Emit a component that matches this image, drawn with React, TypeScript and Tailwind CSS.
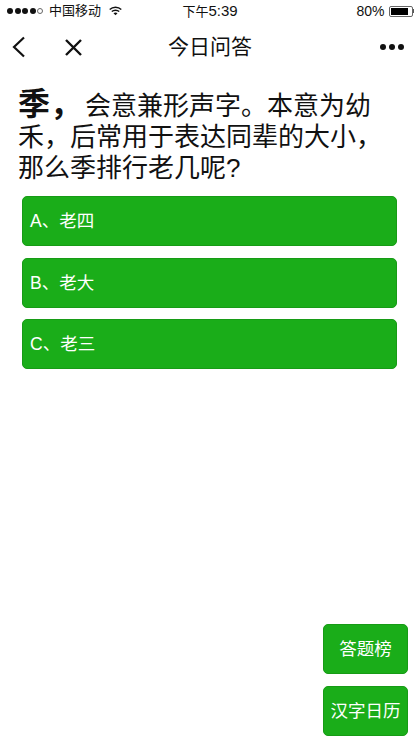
const options = ["A、老四", "B、老大", "C、老三"];
const font = "font-['Liberation_Sans','Noto_Sans_CJK_SC',sans-serif]";

function Wifi() {
  return (
    <svg width="13" height="10" viewBox="0 0 15 11" className="ml-[8px]">
      <path d="M0.8 3.8 C4.5 0.2 10.5 0.2 14.2 3.8" fill="none" stroke="#111" strokeWidth="1.6" />
      <path d="M3.2 6.2 C5.5 4.1 9.5 4.1 11.8 6.2" fill="none" stroke="#111" strokeWidth="1.6" />
      <path d="M7.5 10.5 L5.2 8.1 C6.5 7.1 8.5 7.1 9.8 8.1 Z" fill="#111" />
    </svg>
  );
}

function StatusBar() {
  return (
    <div className="relative flex h-[22px] items-center pl-[7px] pr-[6px] text-[13px] text-[#111]">
      <div className="flex items-center gap-[1.5px]">
        {[0, 1, 2, 3].map((i) => (
          <span key={i} className="size-[6px] rounded-full bg-[#111]" />
        ))}
        <span className="size-[6px] rounded-full border border-[#666]" />
      </div>
      <span className="ml-[6px]">中国移动</span>
      <Wifi />
      <span className="absolute left-0 right-0 text-center">
        下午<span className="text-[15px]">5:39</span>
      </span>
      <div className="ml-auto flex items-center">
        <span className="text-[14px]">80%</span>
        <div className="ml-[4px] flex h-[11px] w-[24px] items-stretch rounded-[2px] border border-[#666] p-[1px]">
          <span className="w-[17px] bg-black" />
        </div>
        <span className="h-[4px] w-[1.5px] bg-[#555]" />
      </div>
    </div>
  );
}

function NavBar() {
  return (
    <div className="relative flex h-[50px] items-center pl-[12px] pr-[16px]">
      <svg width="14" height="22" viewBox="0 0 14 22">
        <path d="M12 1.5 L2 11 L12 20.5" fill="none" stroke="#111" strokeWidth="2.2" />
      </svg>
      <svg width="19" height="19" viewBox="0 0 19 19" className="ml-[38px]">
        <path d="M2 2 L17 17 M17 2 L2 17" fill="none" stroke="#111" strokeWidth="2.4" />
      </svg>
      <h1 className="absolute left-0 right-0 text-center text-[21px] font-normal text-[#111]">今日问答</h1>
      <div className="ml-auto flex gap-[3px]">
        <span className="size-[6px] rounded-full bg-[#111]" />
        <span className="size-[6px] rounded-full bg-[#111]" />
        <span className="size-[6px] rounded-full bg-[#111]" />
      </div>
    </div>
  );
}

export default function App() {
  return (
    <div className={`flex h-[747px] w-[420px] flex-col overflow-hidden bg-white ${font}`}>
      <StatusBar />
      <NavBar />
      <p className="px-[18px] pt-[17px] text-[26px] leading-[31px] text-[#111]">
        <b className="mr-[3px] text-[32px]">季，</b>
        会意兼形声字。本意为幼禾，后常用于表达同辈的大小，那么季排行老几呢?
      </p>
      <div className="mt-[12px] flex flex-col gap-[11.5px] pl-[22px] pr-[23px]">
        {options.map((o) => (
          <button
            key={o}
            className="h-[50px] rounded-[5px] border border-[#179b16] bg-[#1aad19] pb-[-1px] pl-[7px] pt-[1px] text-left text-[17.5px] text-white"
          >
            {o}
          </button>
        ))}
      </div>
      <div className="mt-auto flex flex-col items-end gap-[12px] pb-[11px] pr-[12px]">
        <button className="h-[50px] w-[85px] rounded-[5px] border border-[#179b16] bg-[#1aad19] text-[17.5px] text-white">
          答题榜
        </button>
        <button className="h-[50px] w-[85px] rounded-[5px] border border-[#179b16] bg-[#1aad19] text-[17.5px] text-white">
          汉字日历
        </button>
      </div>
    </div>
  );
}
